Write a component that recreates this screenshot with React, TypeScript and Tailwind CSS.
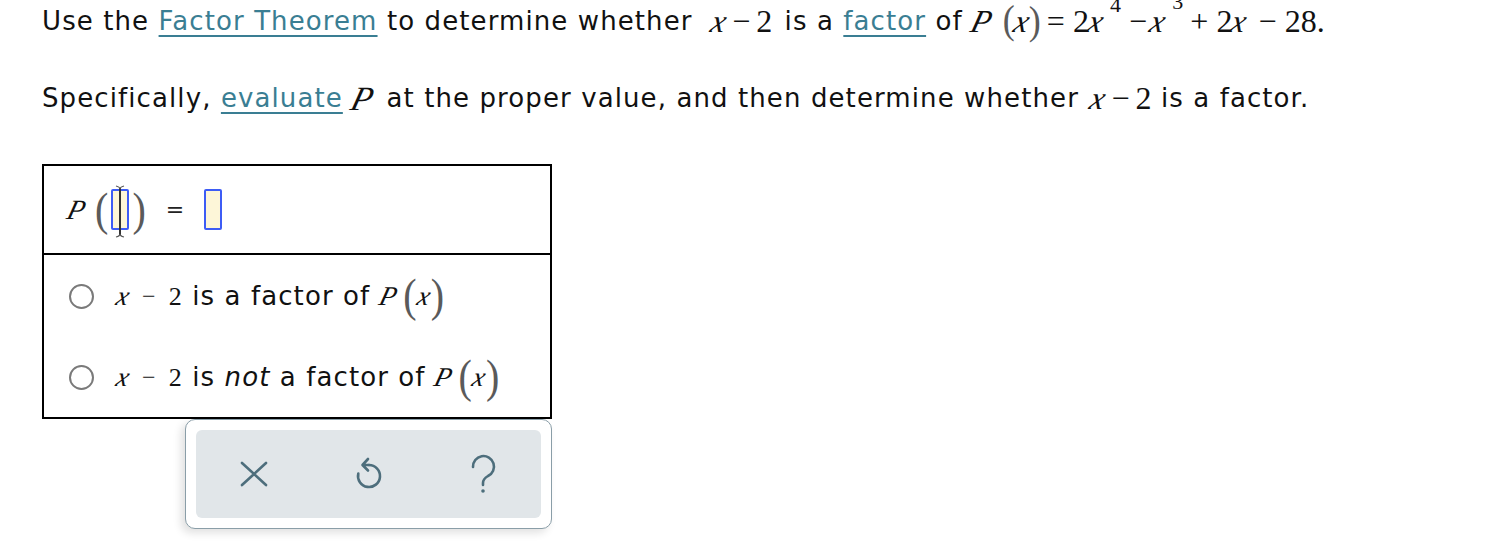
import React from "react";

const serif = "font-['Liberation_Serif',serif]";

// italic serif glyph, leaned like the math renderer's variables
const V = ({ children, className = "" }: { children: React.ReactNode; className?: string }) => (
  <span className={`${serif} inline-block italic [transform:skewX(-15deg)] ${className}`}>{children}</span>
);

const Paren = ({ ch, big }: { ch: string; big?: boolean }) => (
  <span
    className={`${serif} inline-block text-[#5a5a5a] ${
      big ? "text-[40px] scale-y-[1.15]" : "text-[36px] scale-y-[1.1]"
    } font-light leading-none`}
  >
    {ch}
  </span>
);

const Radio = () => (
  <span className="inline-block w-[25px] h-[25px] rounded-full border-[2px] border-[#7a7a7a] bg-white shrink-0" />
);

const AnswerBox = ({ cursor }: { cursor?: boolean }) => (
  <span className="relative inline-block w-[18px] h-[41px] rounded-[2px] border-[2px] border-[#3d5cf5] bg-[#fdf6d8]">
    {cursor && (
      <svg className="absolute left-[1px] -top-[6px]" width="12" height="53" viewBox="0 0 12 53">
        <path d="M6 3 V50" stroke="#333" strokeWidth="2" />
        <path d="M2 1 Q6 2 6 4 Q6 2 10 1 M2 52 Q6 51 6 49 Q6 51 10 52" stroke="#555" strokeWidth="1.2" fill="none" />
      </svg>
    )}
  </span>
);

const link = "text-[#3a7e93] underline underline-offset-[5px] decoration-[2px]";

export default function App() {
  return (
    <div className="min-h-[546px] bg-white overflow-hidden font-['DejaVu_Sans',sans-serif] text-[26px] text-[#111] pl-[42px]">
      {/* question */}
      <div className="h-[42px] flex items-center whitespace-nowrap tracking-[1.1px]">
        Use the&nbsp;
        <span className={link}>Factor Theorem</span>
        &nbsp;to determine whether&nbsp;
        <span className={`${serif} text-[32px] tracking-normal flex items-center ml-[10px] mr-[3px]`}>
          <V>x</V>
          <span className="mx-[6px]">−</span>2
        </span>
        &nbsp;is a&nbsp;
        <span className={link}>factor</span>
        &nbsp;of&nbsp;
        <span className={`${serif} text-[32px] tracking-normal flex items-center`}>
          <V>P</V>
          <span className="ml-[11px]">
            <Paren ch="(" />
          </span>
          <V>x</V>
          <Paren ch=")" />
          <span className="ml-[6px] mr-[8px]">=</span>2<V>x</V>
          <span className="relative -top-[17px] text-[22px] ml-[7px] mr-[8px]">4</span>
          <span className="mr-[4px]">−</span>
          <V>x</V>
          <span className="relative -top-[20px] text-[22px] ml-[7px] mr-[7px]">3</span>
          <span className="mr-[8px]">+</span>2<V>x</V>
          <span className="ml-[12px] mr-[8px]">−</span>28.
        </span>
      </div>
      <div className="mt-[35px] h-[42px] flex items-center whitespace-nowrap tracking-[1.1px]">
        Specifically,&nbsp;
        <span className={link}>evaluate</span>
        &nbsp;
        <V className="text-[34px] mr-[3px]">P</V>
        &nbsp;at the proper value, and then determine whether&nbsp;
        <span className={`${serif} text-[32px] tracking-normal flex items-center ml-[3px]`}>
          <V>x</V>
          <span className="mx-[6px]">−</span>2
        </span>
        &nbsp;is a factor.
      </div>

      {/* answer box */}
      <div className="mt-[45px] w-[510px] border-[2px] border-black">
        <div className="h-[89px] flex items-center pl-[24px] border-b-[2px] border-black">
          <V className="text-[28px] mr-[10px]">P</V>
          <Paren ch="(" big />
          <span className="mx-[3px] flex">
            <AnswerBox cursor />
          </span>
          <Paren ch=")" big />
          <span className="mx-[20px] text-[22px] text-[#222]">=</span>
          <AnswerBox />
        </div>
        <div className="pt-[11px] pb-[10px]">
          <div className="h-[60px] flex items-center pl-[25px]">
            <Radio />
            <span className="ml-[23px] flex items-center whitespace-nowrap tracking-[1.1px]">
              <V className="text-[27px]">x</V>
              <span className={`${serif} mx-[12px] text-[24px]`}>−</span>
              <span className={`${serif} text-[26px]`}>2</span>
              &nbsp;is a factor of&nbsp;
              <V className="text-[27px] mr-[6px]">P</V>
              <Paren ch="(" big />
              <V className="text-[27px]">x</V>
              <Paren ch=")" big />
            </span>
          </div>
          <div className="mt-[21px] h-[60px] flex items-center pl-[25px]">
            <Radio />
            <span className="ml-[23px] flex items-center whitespace-nowrap tracking-[1.1px]">
              <V className="text-[27px]">x</V>
              <span className={`${serif} mx-[12px] text-[24px]`}>−</span>
              <span className={`${serif} text-[26px]`}>2</span>
              &nbsp;is&nbsp;<i>not</i>&nbsp;a factor of&nbsp;
              <V className="text-[27px] mr-[6px]">P</V>
              <Paren ch="(" big />
              <V className="text-[27px]">x</V>
              <Paren ch=")" big />
            </span>
          </div>
        </div>
      </div>

      {/* toolbar */}
      <div className="ml-[143px] w-[367px] h-[110px] rounded-[10px] border-[1.5px] border-[#8a9ea8] bg-white p-[10px] shadow-[-4px_4px_8px_rgba(0,0,0,0.12)]">
        <div className="h-full rounded-[6px] bg-[#e1e6e9] grid grid-cols-3 items-center">
          <div className="flex justify-center">
            <svg width="28" height="28" viewBox="0 0 28 28">
              <path d="M2 3 L26 25 M26 3 L2 25" stroke="#4d6e7c" strokeWidth="2.6" strokeLinecap="round" />
            </svg>
          </div>
          <div className="flex justify-center">
            <svg width="30" height="34" viewBox="0 0 30 34">
              <path d="M15 8 A11 11 0 1 1 4.3 16.5" stroke="#4d6e7c" strokeWidth="2.6" fill="none" strokeLinecap="round" />
              <path d="M15 8 H9 M14 2 L8.5 8 L14 13.5" stroke="#4d6e7c" strokeWidth="2.6" fill="none" strokeLinecap="round" strokeLinejoin="round" />
            </svg>
          </div>
          <div className="flex justify-center">
            <svg width="28" height="40" viewBox="0 0 28 40">
              <path
                d="M3 13 A10.5 10.5 0 1 1 18 22 Q13 25 13 29 V31"
                stroke="#4d6e7c"
                strokeWidth="2.6"
                fill="none"
                strokeLinecap="round"
              />
              <circle cx="13" cy="37" r="1.8" fill="#4d6e7c" />
            </svg>
          </div>
        </div>
      </div>
    </div>
  );
}
